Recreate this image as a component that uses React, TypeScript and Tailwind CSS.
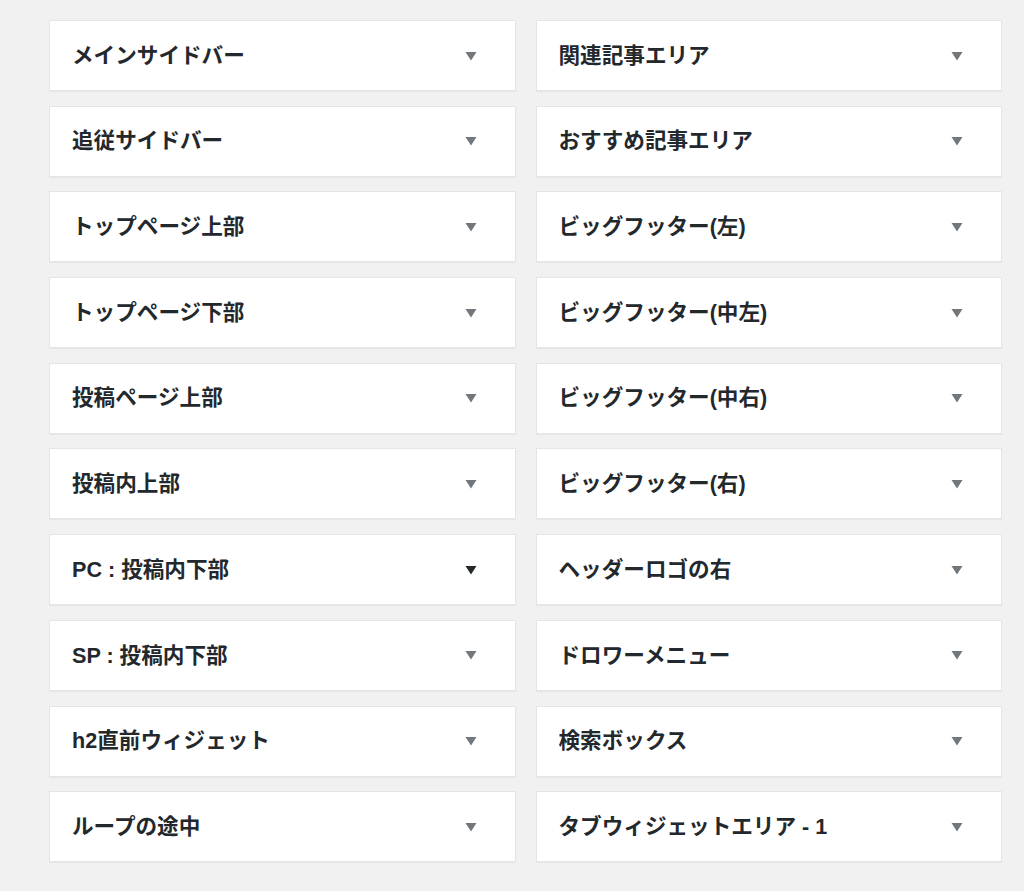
import React from 'react'

const left = [
  'メインサイドバー',
  '追従サイドバー',
  'トップページ上部',
  'トップページ下部',
  '投稿ページ上部',
  '投稿内上部',
  'PC : 投稿内下部',
  'SP : 投稿内下部',
  'h2直前ウィジェット',
  'ループの途中',
]

const right = [
  '関連記事エリア',
  'おすすめ記事エリア',
  'ビッグフッター(左)',
  'ビッグフッター(中左)',
  'ビッグフッター(中右)',
  'ビッグフッター(右)',
  'ヘッダーロゴの右',
  'ドロワーメニュー',
  '検索ボックス',
  'タブウィジェットエリア - 1',
]

const Arrow: React.FC<{ dark?: boolean }> = ({ dark }) => (
  <svg width="12" height="10" viewBox="0 0 12 10" className={dark ? 'text-[#23282d]' : 'text-[#72777c]'}>
    <path d="M0.5 1 L11.5 1 L6 9.5 Z" fill="currentColor" />
  </svg>
)

const Card: React.FC<{ title: string; active?: boolean }> = ({ title, active }) => (
  <div className="h-[71px] bg-white border border-[#e5e5e5] shadow-[0_1px_1px_rgba(0,0,0,0.04)] flex items-center justify-between pl-[22px] pr-[38px]">
    <span className="text-[21.6px] font-bold text-[#23282d] leading-none whitespace-pre">{title}</span>
    <Arrow dark={active} />
  </div>
)

export default function App() {
  return (
    <div
      className="w-[1024px] h-[891px] bg-[#f1f1f1] pt-[20px] pl-[49px] pr-[22px] overflow-hidden"
      style={{ fontFamily: '"Liberation Sans", "Noto Sans CJK JP", sans-serif' }}
    >
      <div className="grid grid-cols-2 gap-x-[20px]">
        <div className="flex flex-col gap-[14.7px]">
          {left.map((t) => (
            <Card key={t} title={t} active={t === 'PC : 投稿内下部'} />
          ))}
        </div>
        <div className="flex flex-col gap-[14.7px]">
          {right.map((t) => (
            <Card key={t} title={t} />
          ))}
        </div>
      </div>
    </div>
  )
}
